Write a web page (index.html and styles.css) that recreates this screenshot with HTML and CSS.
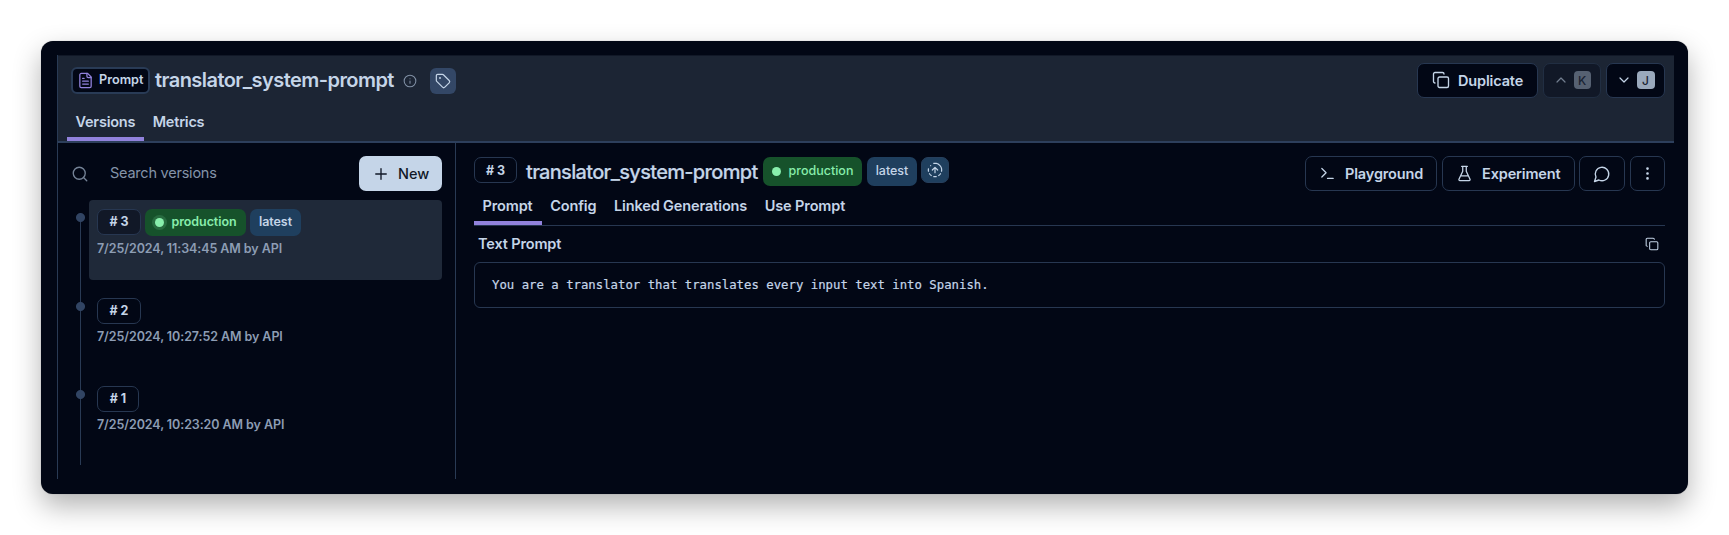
FILE: index.html
```html
<!DOCTYPE html>
<html lang="en">
<head>
<meta charset="utf-8">
<title>translator_system-prompt</title>
<link rel="stylesheet" href="styles.css">
</head>
<body>
<svg class="defs" width="0" height="0">
  <symbol id="copy" viewBox="0 0 24 24"><rect x="8" y="8" width="14" height="14" rx="2"/><path d="M4 16c-1.1 0-2-.9-2-2V4c0-1.1.9-2 2-2h10c1.1 0 2 .9 2 2"/></symbol>
</svg>
<div class="window">
  <div class="app">
    <header class="header">
      <div class="header-row">
        <span class="type-badge"><svg class="icon" width="17" height="17" viewBox="0 0 24 24"><path d="M15 2H6a2 2 0 0 0-2 2v16a2 2 0 0 0 2 2h12a2 2 0 0 0 2-2V7Z"/><path d="M14 2v4a2 2 0 0 0 2 2h4M10 9H8M16 13H8M16 17H8"/></svg><span>Prompt</span></span>
        <h1 class="title">translator_system-prompt</h1>
        <svg class="icon info" width="14" height="14" viewBox="0 0 24 24"><circle cx="12" cy="12" r="10"/><path d="M12 16v-4M12 8h.01"/></svg>
        <button class="tag"><svg class="icon" width="16" height="16" viewBox="0 0 24 24"><path d="M12.586 2.586A2 2 0 0 0 11.172 2H4a2 2 0 0 0-2 2v7.172a2 2 0 0 0 .586 1.414l8.704 8.704a2.426 2.426 0 0 0 3.42 0l6.58-6.58a2.426 2.426 0 0 0 0-3.42z"/><circle cx="7.5" cy="7.5" r=".6"/></svg></button>
        <div class="nav">
          <button class="btn duplicate"><svg class="icon" width="18" height="18"><use href="#copy"/></svg><span>Duplicate</span></button>
          <button class="btn key-btn disabled"><svg class="icon" width="16" height="16" viewBox="0 0 24 24"><path d="m18 15-6-6-6 6"/></svg><kbd>K</kbd></button>
          <button class="btn key-btn"><svg class="icon" width="16" height="16" viewBox="0 0 24 24"><path d="m6 9 6 6 6-6"/></svg><kbd>J</kbd></button>
        </div>
      </div>
      <nav class="tabs"><a class="tab active">Versions</a><a class="tab">Metrics</a></nav>
    </header>
    <div class="body">
      <aside class="sidebar">
        <div class="search">
          <svg class="icon" width="18" height="18" viewBox="0 0 24 24"><circle cx="11" cy="11" r="8"/><path d="m21 21-4.3-4.3"/></svg>
          <span class="placeholder">Search versions</span>
          <button class="new"><svg class="icon" width="18" height="18" viewBox="0 0 24 24"><path d="M5 12h14M12 5v14"/></svg><span>New</span></button>
        </div>
        <div class="timeline">
          <div class="rail"></div>
          <div class="versions">
            <div class="version selected"><div class="badges"><span class="num"># 3</span><span class="prod"><i class="dot halo"></i>production</span><span class="latest">latest</span></div><div class="date">7/25/2024, 11:34:45 AM by API</div></div>
            <div class="version"><div class="badges"><span class="num"># 2</span></div><div class="date">7/25/2024, 10:27:52 AM by API</div></div>
            <div class="version"><div class="badges"><span class="num one"># 1</span></div><div class="date">7/25/2024, 10:23:20 AM by API</div></div>
          </div>
        </div>
      </aside>
      <main class="main">
        <div class="prompt-head">
          <span class="num"># 3</span>
          <h2 class="subtitle">translator_system-prompt</h2>
          <span class="prod"><i class="dot"></i>production</span>
          <span class="latest">latest</span>
          <button class="promote"><svg class="icon" width="16" height="16" viewBox="0 0 24 24"><path d="M10.1 2.18a9.93 9.93 0 0 1 3.8 0M17.6 3.71a9.95 9.95 0 0 1 2.69 2.7M21.82 10.1a9.93 9.93 0 0 1 0 3.8M20.29 17.6a9.95 9.95 0 0 1-2.7 2.69M13.9 21.82a9.94 9.94 0 0 1-3.8 0M6.4 20.29a9.95 9.95 0 0 1-2.69-2.7M2.18 13.9a9.93 9.93 0 0 1 0-3.8M5.5 5.5h.01M13.9 2.18a10 10 0 0 1 3.7 1.53M20.29 6.4a10 10 0 0 1 1.53 3.7"/><path d="m8 12 4-4 4 4M12 16V8"/></svg></button>
          <div class="actions">
            <button class="btn play"><svg class="icon" width="17" height="17" viewBox="0 0 24 24"><path d="m4 17 6-6-6-6M12 19h8"/></svg><span>Playground</span></button>
            <button class="btn exp"><svg class="icon" width="17" height="17" viewBox="0 0 24 24"><path d="M14.5 2v6.8L19.8 20a1.4 1.4 0 0 1-1.3 2h-13a1.4 1.4 0 0 1-1.3-2L9.500 8.800V2M8 2h8M7 15.500h10"/></svg><span>Experiment</span></button>
            <button class="btn chat"><svg class="icon" width="18" height="18" viewBox="0 0 24 24"><path d="M7.900 20A9 9 0 1 0 4 16.100L2 22Z"/></svg></button>
            <button class="btn more"><svg class="icon" width="17" height="17" viewBox="0 0 24 24"><circle cx="12" cy="12" r="1"/><circle cx="12" cy="5" r="1"/><circle cx="12" cy="19" r="1"/></svg></button>
          </div>
        </div>
        <nav class="tabs sub"><a class="tab active">Prompt</a><a class="tab">Config</a><a class="tab">Linked Generations</a><a class="tab">Use Prompt</a></nav>
        <div class="section-head"><span>Text Prompt</span><svg class="icon" width="14" height="14"><use href="#copy"/></svg></div>
        <pre class="code">You are a translator that translates every input text into Spanish.</pre>
      </main>
    </div>
  </div>
</div>
</body>
</html>
```
FILE: styles.css
```css
* { box-sizing: border-box; }
body {
  margin: 0;
  height: 535px;
  padding: 41px;
  overflow: hidden;
  background: #fff;
  color: #c5d5e8;
  font-family: Inter, "Liberation Sans", sans-serif;
  font-size: 14px;
}
button { font: inherit; color: inherit; margin: 0; padding: 0; border: 0; background: none; }
h1, h2, pre { margin: 0; }
.defs { position: absolute; }
.icon { flex: none; fill: none; stroke: currentColor; stroke-width: 1.8; stroke-linecap: round; stroke-linejoin: round; overflow: visible; }
.window {
  width: 1647px;
  height: 453px;
  padding: 14px 14px 15px 16px;
  border-radius: 12px;
  background: #020715;
  box-shadow: 0 0 1px rgba(0,0,0,.4), 0 12px 28px rgba(0,0,0,.3);
}
.app { display: flex; flex-direction: column; height: 424px; border-left: 1px solid #293a54; }
.header { height: 88px; flex: none; background: #1c2534; border-bottom: 2px solid #2d3f5c; border-top: 1px solid #111827; }
.header-row { display: flex; align-items: center; height: 49px; padding: 0 9px 0 13px; }
.type-badge {
  display: flex; align-items: center; gap: 5px;
  width: 79px; height: 27px; padding-left: 4px;
  border: 2px solid #293b56; border-radius: 6px; background: #020715;
  font-size: 12.700px; font-weight: 600; line-height: 20px; white-space: nowrap;
}
.type-badge span { margin-top: -1px; }
.type-badge .icon { color: #9182dc; }
.title { width: 239px; margin: -1px 0 0 5px; font-size: 20px; font-weight: 600; line-height: 28px; white-space: nowrap; letter-spacing: -.55px; }
.info { margin-left: 8.500px; color: #8190a5; }
.tag { display: grid; place-items: center; width: 26px; height: 26px; margin-left: 13.500px; border-radius: 6px; background: #334766; }
.nav { display: flex; gap: 5px; margin: -1px 0 0 auto; }
.btn {
  display: flex; align-items: center; height: 35px;
  border: 1px solid #273751; border-radius: 7px; background: #020715;
  font-size: 14.500px; font-weight: 600; letter-spacing: -.15px; white-space: nowrap;
}
.duplicate { width: 121px; padding-left: 14px; gap: 8px; }
.key-btn { width: 59px; padding-left: 8.500px; gap: 5px; }
.disabled { width: 58px; background: #111827; border-color: #212e42; color: #727e8f; }
kbd { display: grid; place-items: center; width: 18px; height: 18px; border-radius: 4px; background: #9aa9bc; color: #1c2534; font: 500 12px Inter, sans-serif; }
.disabled kbd { width: 17px; background: #566172; color: #1a2332; }
.tabs { display: flex; height: 36px; padding-left: 9px; font-weight: 600; font-size: 14.500px; letter-spacing: -.22px; }
.tab { padding: 0 9px 0 8.500px; height: 36px; line-height: 33px; white-space: nowrap; border-bottom: 4px solid transparent; }
.tab.active { border-color: #9182dc; }
.body { display: flex; flex: 1; min-height: 0; }
.sidebar { width: 398px; flex: none; border-right: 1px solid #293a54; }
.search { display: flex; align-items: center; height: 35px; margin: 13px 13px 9px; }
.search > .icon { color: #758397; }
.placeholder { margin: -2px 0 0 21px; color: #8493a8; font-size: 14.500px; letter-spacing: -.23px; white-space: nowrap; }
.new { display: flex; align-items: center; gap: 8px; width: 83px; height: 35px; margin-left: auto; padding-left: 13px; border-radius: 7px; background: #c5d5e8; color: #111827; font-weight: 500; font-size: 14.500px; }
.timeline { display: flex; align-items: flex-start; padding-left: 18px; }
.rail {
  width: 9px; height: 252px; margin: 13px 4px 0 0;
  background:
    radial-gradient(circle at 4.500px 4.500px, #314463 4px, transparent 5px),
    radial-gradient(circle at 4.500px 93.500px, #314463 4px, transparent 5px),
    radial-gradient(circle at 4.500px 181.500px, #314463 4px, transparent 5px),
    linear-gradient(#293a54, #293a54) 4px 0 / 1px 100% no-repeat;
}
.versions { display: grid; gap: 8px; width: 353px; }
.version { height: 80px; padding: 9px 8px; border-radius: 4px; }
.version.selected { background: #1f2939; margin-bottom: 1px; }
.badges { display: flex; gap: 4px; height: 27px; align-items: flex-start; }
.num { display: grid; place-items: center; flex: none; width: 44px; height: 26px; padding-bottom: 1px; border: 1px solid #273751; border-radius: 7px; font-size: 12.500px; font-weight: 700; letter-spacing: 0; }
.selected .num { background: #111827; }
.num.one { width: 42px; }
.prod, .latest { display: flex; align-items: center; justify-content: center; flex: none; height: 27px; padding-bottom: 2px; border-radius: 7px; font-size: 12.500px; font-weight: 600; letter-spacing: -.08px; }
.prod { width: 101px; gap: 8px; background: #16522b; color: #88edac; }
.latest { width: 51px; background: #1f3f5e; }
.dot { width: 9px; height: 9px; margin-top: 1px; border-radius: 50%; background: #88efac; }
.halo { box-shadow: 0 0 0 3px #286b40; }
.date { margin-top: 4px; color: #8d9db4; font-size: 12.500px; line-height: 18px; font-weight: 600; letter-spacing: -.08px; white-space: nowrap; }
.version:not(.selected) .date { margin-top: 3px; }
.main { flex: 1; padding: 13px 9px 0 18px; }
.prompt-head { display: flex; align-items: flex-start; height: 42px; }
.prompt-head .num { width: 43px; margin-top: 1px; padding-bottom: 0; }
.subtitle { width: 237px; margin: 2px 0 0 9px; font-size: 20px; line-height: 28px; font-weight: 500; letter-spacing: -.68px; white-space: nowrap; -webkit-text-stroke: .2px currentColor; }
.prompt-head .prod, .prompt-head .latest { height: 29px; padding-bottom: 2px; margin-top: 1px; font-weight: 500; letter-spacing: 0; }
.prompt-head .prod { width: 99px; }
.prompt-head .latest { width: 50px; margin-left: 5px; }
.promote { display: grid; place-items: center; width: 28px; height: 26px; margin: 1px 0 0 4px; border-radius: 7px; border: 1px solid #273f5c; background: #1f3f5e; }
.actions { display: flex; gap: 5px; margin-left: auto; }
.play { width: 132px; padding-left: 13px; gap: 9px; }
.exp { width: 133px; padding-left: 13px; gap: 9px; margin-right: -1px; }
.chat { width: 46px; justify-content: center; }
.more { width: 35px; justify-content: center; padding-right: 1px; }
.tabs.sub { height: 28px; padding: 0; border-bottom: 1px solid #273751; letter-spacing: -.12px; }
.sub .tab { height: 27px; line-height: 15px; }
.section-head { display: flex; align-items: center; justify-content: space-between; height: 36px; padding: 0 6px 0 4px; font-weight: 600; font-size: 14.500px; letter-spacing: -.15px; }
.section-head span { margin-top: -2px; }
.code { height: 46px; padding: 0 17px; border: 1px solid #273751; border-radius: 6px; font: 12.320px/44px "DejaVu Sans Mono", monospace; -webkit-text-stroke: .2px currentColor; }
```
